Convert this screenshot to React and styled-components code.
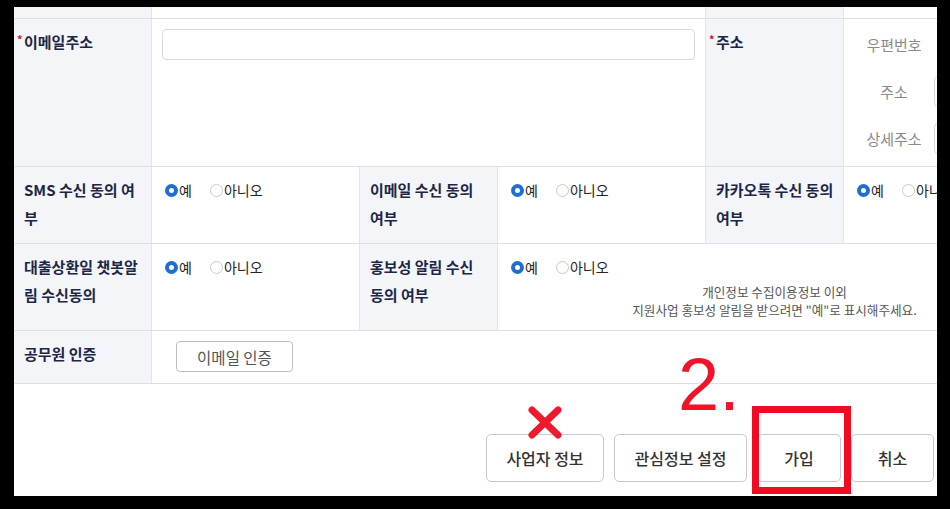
import React from "react";
import styled, { createGlobalStyle } from "styled-components";

const Global_Style = createGlobalStyle`
  html, body {
    margin: 0;
    padding: 0;
    background: #000;
  }
  body {
    font-family: "Noto Sans CJK KR", "Noto Sans", sans-serif;
  }
`;

const Styled_Frame = styled.div`
  width: 950px;
  height: 509px;
  box-sizing: border-box;
  padding: 7px 13px 13px 14px;
  background: #000;
`;

const Styled_Viewport = styled.div`
  position: relative;
  height: 100%;
  overflow: hidden;
  background: #fff;
`;

const Styled_Form_Grid = styled.div`
  display: grid;
  width: 1038px;
  grid-template-columns: 138px 208px 138px 208px 138px 208px;
`;

const Styled_Stub = styled.div`
  height: 12px;
  box-sizing: border-box;
  background: ${({ $label }) => ($label ? "#f3f5f9" : "#fff")};
  border-right: 1px solid #e3e5e9;
  border-bottom: 1px solid #dedfe2;
  grid-column: span ${({ $span }) => $span || 1};
`;

const Styled_Label = styled.div`
  box-sizing: border-box;
  padding: 9px 10px 11px;
  background: #f3f5f9;
  border-right: 1px solid #e3e5e9;
  border-bottom: 1px solid #dedfe2;
  font-size: 15px;
  font-weight: 700;
  line-height: 28px;
  color: #1c2748;
  white-space: nowrap;
`;

const Styled_Star = styled.span`
  display: inline-block;
  margin-left: -7px;
  width: 7px;
  font-size: 11px;
  line-height: 10px;
  vertical-align: top;
  margin-top: 6px;
  color: #d4141c;
`;

const Styled_Value = styled.div`
  box-sizing: border-box;
  padding: ${({ $pad }) => $pad || "9px 13px 11px"};
  border-right: 1px solid #e3e5e9;
  border-bottom: 1px solid #dedfe2;
  grid-column: span ${({ $span }) => $span || 1};
  min-width: 0;
`;

const Styled_Text_Input = styled.div`
  height: 31px;
  box-sizing: border-box;
  border: 1px solid #d6d8dc;
  border-radius: 4px;
  background: #fff;
  margin-left: ${({ $shift }) => $shift || "0"};
`;

const Styled_Address_Grid = styled.div`
  display: grid;
  grid-template-columns: 90px 1fr;
  row-gap: 16px;
  align-items: center;
`;

const Styled_Sub_Label = styled.div`
  box-sizing: border-box;
  padding-left: 10px;
  text-align: center;
  font-size: 15px;
  color: #8a8a8a;
`;

const Styled_Radio_Group = styled.div`
  display: flex;
  gap: 18px;
  font-size: 14px;
  line-height: 28px;
  color: #222;
`;

const Styled_Radio_Option = styled.label`
  display: inline-flex;
  align-items: center;
  gap: 1px;
`;

const Styled_Radio_Dot = styled.span`
  width: 13px;
  height: 13px;
  box-sizing: border-box;
  border-radius: 50%;
  background: #fff;
  border: ${({ $checked }) => ($checked ? "4px solid #1f6fd2" : "1px solid #cacaca")};
`;

const Styled_Note = styled.p`
  margin: 2px 0 0;
  text-align: center;
  font-size: 12.6px;
  line-height: 18px;
  color: #555;
`;

const Styled_Note_Line = styled.span`
  display: block;
`;

const Styled_Small_Button = styled.button`
  width: 117px;
  height: 31px;
  margin-left: 11px;
  border: 1px solid #bdbdbd;
  border-radius: 4px;
  background: #fff;
  font-family: inherit;
  font-size: 15.5px;
  color: #555;
`;

const Styled_Action_Bar = styled.div`
  display: flex;
  justify-content: flex-end;
  gap: 10px;
  padding: 50px 3px 0 0;
`;

const Styled_Action_Button = styled.button`
  width: ${({ $w }) => $w}px;
  height: 48px;
  border: 1px solid #c9c9c9;
  border-radius: 5px;
  background: #fff;
  font-family: inherit;
  font-size: 16px;
  font-weight: 500;
  color: #333;
`;

const Styled_Step_Number = styled.span`
  position: absolute;
  left: 664px;
  top: 341px;
  font-family: "Liberation Sans", Arial, sans-serif;
  font-size: 74px;
  line-height: 1;
  color: #f2132b;
`;

const Styled_Cross = styled.svg`
  position: absolute;
  left: 513px;
  top: 398px;
`;

const Styled_Highlight = styled.div`
  position: absolute;
  left: 738px;
  top: 399px;
  width: 99px;
  height: 88px;
  box-sizing: border-box;
  border: 7px solid #f20a22;
`;

const Radio_Pair = () => (
    <Styled_Radio_Group>
        <Styled_Radio_Option>
            <Styled_Radio_Dot $checked />예
        </Styled_Radio_Option>
        <Styled_Radio_Option>
            <Styled_Radio_Dot />아니오
        </Styled_Radio_Option>
    </Styled_Radio_Group>
);

const App = () => (
    <>
        <Global_Style />
        <Styled_Frame>
            <Styled_Viewport>
                <Styled_Form_Grid>
                    <Styled_Stub $label />
                    <Styled_Stub $span={3} />
                    <Styled_Stub $label />
                    <Styled_Stub />

                    <Styled_Label>
                        <Styled_Star>*</Styled_Star>이메일주소
                    </Styled_Label>
                    <Styled_Value $span={3} $pad="10px 10px">
                        <Styled_Text_Input />
                    </Styled_Value>
                    <Styled_Label>
                        <Styled_Star>*</Styled_Star>주소
                    </Styled_Label>
                    <Styled_Value $pad="10px 0 12px">
                        <Styled_Address_Grid>
                            <Styled_Sub_Label>우편번호</Styled_Sub_Label>
                            <Styled_Text_Input $shift="12px" />
                            <Styled_Sub_Label>주소</Styled_Sub_Label>
                            <Styled_Text_Input />
                            <Styled_Sub_Label>상세주소</Styled_Sub_Label>
                            <Styled_Text_Input />
                        </Styled_Address_Grid>
                    </Styled_Value>

                    <Styled_Label>SMS 수신 동의 여<br />부</Styled_Label>
                    <Styled_Value><Radio_Pair /></Styled_Value>
                    <Styled_Label>이메일 수신 동의<br />여부</Styled_Label>
                    <Styled_Value><Radio_Pair /></Styled_Value>
                    <Styled_Label>카카오톡 수신 동의<br />여부</Styled_Label>
                    <Styled_Value><Radio_Pair /></Styled_Value>

                    <Styled_Label>대출상환일 챗봇알<br />림 수신동의</Styled_Label>
                    <Styled_Value><Radio_Pair /></Styled_Value>
                    <Styled_Label>홍보성 알림 수신<br />동의 여부</Styled_Label>
                    <Styled_Value $span={3} $pad="9px 13px 11px">
                        <Radio_Pair />
                        <Styled_Note>
                            <Styled_Note_Line>개인정보 수집이용정보 이외</Styled_Note_Line>
                            <Styled_Note_Line>지원사업 홍보성 알림을 받으려면 "예"로 표시해주세요.</Styled_Note_Line>
                        </Styled_Note>
                    </Styled_Value>

                    <Styled_Label>공무원 인증</Styled_Label>
                    <Styled_Value $span={5} $pad="10px 13px 11px">
                        <Styled_Small_Button>이메일 인증</Styled_Small_Button>
                    </Styled_Value>
                </Styled_Form_Grid>

                <Styled_Action_Bar>
                    <Styled_Action_Button $w={118}>사업자 정보</Styled_Action_Button>
                    <Styled_Action_Button $w={133}>관심정보 설정</Styled_Action_Button>
                    <Styled_Action_Button $w={84}>가입</Styled_Action_Button>
                    <Styled_Action_Button $w={83}>취소</Styled_Action_Button>
                </Styled_Action_Bar>

                <Styled_Step_Number>2.</Styled_Step_Number>
                <Styled_Cross width="36" height="35" viewBox="0 0 36 35">
                    <path d="M5 5 L31 30 M31 5 L5 30" stroke="#ee1a2e" strokeWidth="7" strokeLinecap="round" fill="none" />
                </Styled_Cross>
                <Styled_Highlight />
            </Styled_Viewport>
        </Styled_Frame>
    </>
);

export default App;
